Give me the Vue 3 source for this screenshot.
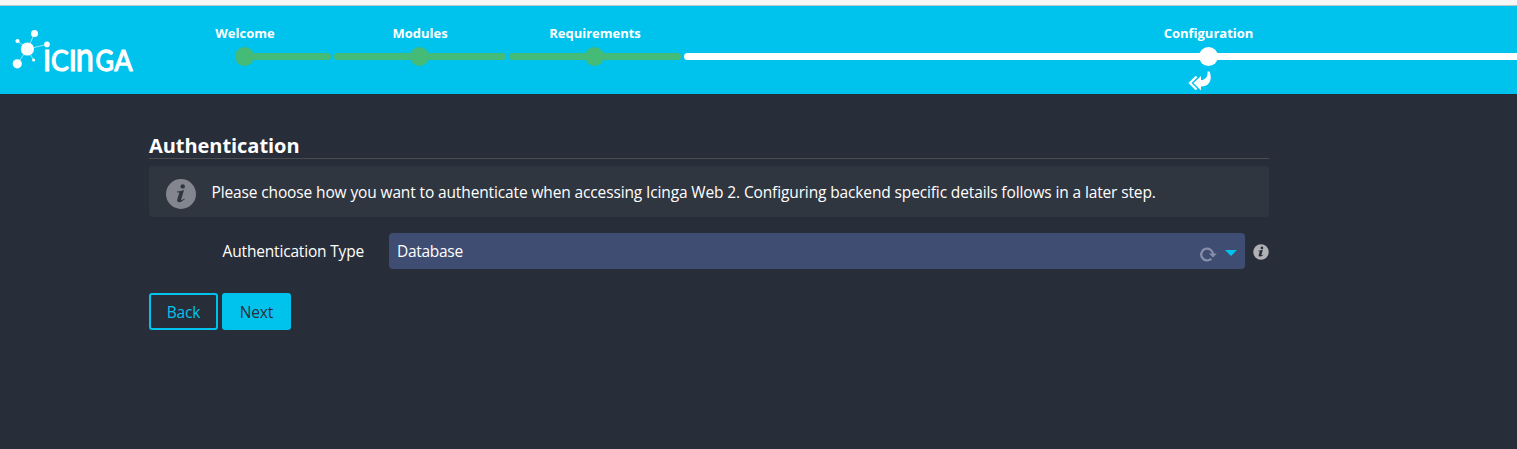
<script setup>
const steps = [
  { name: 'Welcome', state: 'done first' },
  { name: 'Modules', state: 'done' },
  { name: 'Requirements', state: 'done' },
  { name: 'Configuration', state: 'active' },
]
</script>

<template>
  <div class="page">
    <div class="strip"></div>
    <header class="header">
      <svg class="logo" width="150" height="88" viewBox="0 6 150 88">
        <g stroke="#fff" stroke-opacity=".65" stroke-width=".9">
          <path d="M27.5 49L34.5 33.5M27.5 49L17.5 41M27.5 49L47 44.500M27.500 49L17.300 63.800M27.500 49L33.500 60" />
        </g>
        <g fill="#fff">
          <circle cx="27.400" cy="49" r="6.600" />
          <circle cx="34.500" cy="33.500" r="3.500" />
          <circle cx="17.500" cy="41" r="2.100" />
          <circle cx="47" cy="44.400" r="2.800" />
          <circle cx="17.300" cy="63.800" r="4.600" />
          <circle cx="33.600" cy="60" r="1.500" />
        </g>
        <g class="wordmark">
          <text transform="translate(42.900 71)">I</text>
          <text transform="translate(51 71) scale(.92 1)">C</text>
          <text transform="translate(68.700 71)">I</text>
          <text transform="translate(75.800 71) scale(1.120 1.380)">n</text>
          <text transform="translate(95.600 71) scale(.87 1)">G</text>
          <text transform="translate(114.200 71) scale(.93 1)">A</text>
        </g>
      </svg>
      <ol class="steps">
        <li v-for="s in steps" :key="s.name" class="step" :class="s.state">
          <span class="name">{{ s.name }}</span>
          <span class="track"><span class="line"></span><span class="dot"></span></span>
          <svg v-if="s.state === 'active'" class="reply" width="24" height="21" viewBox="0 0 24 21">
            <path d="M8.500 5.500L2 12L8.500 18.500" fill="none" stroke="#fff" stroke-width="2.300" />
            <path d="M5.500 12L13 5V9C17.500 9 20 5.500 19.500 0.500H21.500C24.500 7 22.500 15.500 13 15.500V19.500Z" fill="#fff" />
          </svg>
        </li>
      </ol>
    </header>

    <main class="content">
      <h1>Authentication</h1>
      <div class="note">
        <svg class="big-info" width="30" height="30" viewBox="0 0 30 30">
          <circle cx="15" cy="15" r="15" fill="#83868e" />
          <circle cx="16.700" cy="7.400" r="2.200" fill="#30363f" />
          <path d="M11 12.500Q15 12 18 11L15.200 20.500Q15 22 18.300 19.500L18.700 20.200Q15 23.500 12.500 23.200Q10.500 22.800 11.500 19.500L13.300 14Q13.500 13.200 11 13.400Z" fill="#30363f" />
        </svg>
        <p>Please choose how you want to authenticate when accessing Icinga Web 2. Configuring backend specific details follows in a later step.</p>
      </div>
      <div class="row">
        <label>Authentication Type</label>
        <div class="select">
          <span class="value">Database</span>
          <svg class="reload" width="17" height="16" viewBox="0 0 17 16">
            <path d="M11.300 12.700A5.900 5.900 0 1 1 13 8" fill="none" stroke="#868eaa" stroke-width="2.300" />
            <path d="M9 7.500H16.800L13 11.500Z" fill="#868eaa" />
          </svg>
          <svg class="caret" width="12" height="6" viewBox="0 0 12 6"><path d="M0 0H12L6 6Z" fill="#00c3ed" /></svg>
        </div>
        <svg class="info" width="16" height="16" viewBox="0 0 30 30">
          <circle cx="15" cy="15" r="14.500" fill="#b0b1b4" />
          <circle cx="16.700" cy="7.400" r="2.500" fill="#282e39" />
          <path d="M10 12.500Q15 12 18.500 11L15.700 20.500Q15.500 21.500 18.500 20L19 21Q15 24 12 23.500Q10 22.800 11 19.500L12.700 14.200L10 13.800Z" fill="#282e39" />
        </svg>
      </div>
      <div class="buttons">
        <button class="back">Back</button>
        <button class="next">Next</button>
      </div>
    </main>
  </div>
</template>

<style>
body { background: #282e39; }
</style>

<style scoped>
.page {
  box-sizing: border-box;
  width: 1517px;
  height: 449px;
  overflow: hidden;
  background: #282e39;
  color: #fff;
  font-family: "Segoe UI", "Open Sans", "Noto Sans", sans-serif;
  font-size: 15.5px;
}
.strip { box-sizing: border-box; height: 6px; background: #f6f6f6; border-bottom: 1px solid #bcc6c8; }
.header { display: flex; height: 88px; background: #00c3ed; overflow: hidden; }
.logo { flex: none; display: block; }
.wordmark { fill: #fff; stroke: #fff; stroke-linejoin: round; font: 400 29px Lato, sans-serif; }
.wordmark text { stroke-width: 1.2; vector-effect: non-scaling-stroke; }
.steps { display: grid; grid-template-columns: 172px 172px 172px 1049px; column-gap: 3px; margin: 0 0 0 9px; padding: 0; list-style: none; flex: none; }
.step { display: flex; flex-direction: column; align-items: center; }
.name { margin-top: 18px; height: 23px; line-height: 18px; font-size: 13px; font-weight: 700; white-space: nowrap; }
.track { display: grid; width: 100%; height: 19px; align-items: center; justify-items: center; }
.line, .dot { grid-area: 1 / 1; }
.line { width: 100%; height: 7px; border-radius: 4px; background: #44bb77; }
.first .line { width: 50%; justify-self: end; border-radius: 0 4px 4px 0; }
.dot { width: 19px; height: 19px; margin-right: 1px; border-radius: 50%; background: #44bb77; }
.active .line, .active .dot { background: #fff; }
.active .dot { margin-right: 0; }
.reply { margin: 5px 18px 0 0; display: block; }
.content { width: 1120px; margin-left: 149px; padding-top: 38px; }
h1 { box-sizing: border-box; margin: 0; height: 27px; border-bottom: 1px solid #4b4c50; font-size: 20px; line-height: 27px; font-weight: 700; letter-spacing: -.05px; }
.note { display: flex; align-items: center; box-sizing: border-box; height: 51px; margin-top: 7px; padding-left: 17px; border-radius: 4px; background: #30363f; }
.big-info { flex: none; margin-top: 4px; }
.note p { margin: 1px 0 0 15.5px; white-space: nowrap; letter-spacing: -.13px; }
.row { display: flex; align-items: center; height: 36px; margin-top: 16px; }
label { width: 215px; margin-right: 25px; text-align: right; white-space: nowrap; letter-spacing: -.18px; }
.select { display: flex; align-items: center; box-sizing: border-box; width: 856px; height: 36px; padding: 0 8px; border-radius: 4px; background: #404d72; }
.value { flex: 1; letter-spacing: -.3px; }
.reload { margin: 5px 8px 0 0; }
.caret { margin-top: 3px; }
.info { margin: 1px 0 0 8px; }
.buttons { display: flex; gap: 4px; margin-top: 24px; }
button { box-sizing: border-box; width: 69px; height: 37px; padding: 0; border: 2px solid #00c3ed; border-radius: 3px; font: inherit; letter-spacing: -.15px; }
.back { background: transparent; color: #00c3ed; }
.next { background: #00c3ed; color: #282e39; }
</style>
